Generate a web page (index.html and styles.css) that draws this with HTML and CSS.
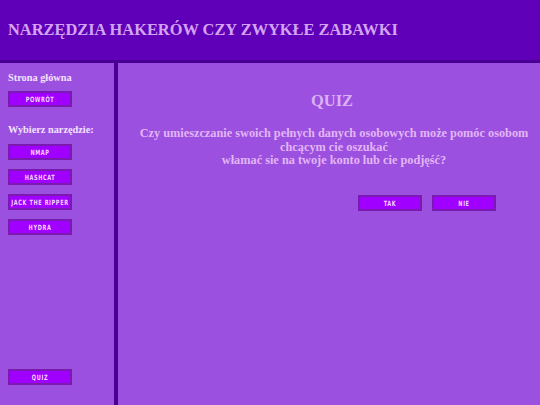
FILE: index.html
```html
<!DOCTYPE html>
<html lang="pl">
<head>
<meta charset="utf-8">
<title>Quiz</title>
<link rel="stylesheet" href="styles.css">
</head>
<body>
<header class="top">
  <h1 class="title">NARZĘDZIA HAKERÓW CZY ZWYKŁE ZABAWKI</h1>
</header>
<div class="main">
  <nav class="side">
    <h3 class="side-head">Strona główna</h3>
    <button class="btn"><span class="lbl">POWRÓT</span></button>
    <h3 class="side-head second">Wybierz narzędzie:</h3>
    <div class="tools">
      <button class="btn"><span class="lbl">NMAP</span></button>
      <button class="btn"><span class="lbl">HASHCAT</span></button>
      <button class="btn"><span class="lbl">JACK THE RIPPER</span></button>
      <button class="btn"><span class="lbl">HYDRA</span></button>
    </div>
    <button class="btn quiz-btn"><span class="lbl">QUIZ</span></button>
  </nav>
  <section class="content">
    <h2 class="quiz-title">QUIZ</h2>
    <p class="question">Czy umieszczanie swoich pełnych danych osobowych może pomóc osobom chcącym cie oszukać<br>włamać sie na twoje konto lub cie podjęść?</p>
    <div class="answers">
      <button class="btn"><span class="lbl">TAK</span></button>
      <button class="btn"><span class="lbl">NIE</span></button>
    </div>
  </section>
</div>
</body>
</html>
```
FILE: styles.css
```css
* { box-sizing: border-box; }
html, body { margin: 0; padding: 0; height: 100%; }
body {
  font-family: "Liberation Serif", "Times New Roman", serif;
  background: #9b50e0;
  overflow: hidden;
}
.top {
  height: 63px;
  background: #5f00b8;
  border-bottom: 3px solid #4a0094;
  display: flex;
  align-items: center;
  padding: 0 8px 0;
}
.title {
  margin: 0;
  font-size: 16.4px;
  font-weight: bold;
  color: #d4a4f2;
}
.main {
  display: flex;
  height: 342px;
}
.side {
  width: 118px;
  border-right: 4px solid #4a0094;
  background: #9b50e0;
  display: flex;
  flex-direction: column;
  align-items: flex-start;
  padding: 8px 0 20px 8px;
}
.side-head {
  margin: 0;
  font-size: 10.3px;
  line-height: 13px;
  font-weight: bold;
  color: #f2e2ff;
}
.side > .btn:first-of-type { margin-top: 7px; }
.second { margin-top: 16px; }
.tools {
  display: flex;
  flex-direction: column;
  gap: 9px;
  margin-top: 8px;
}
.btn {
  width: 64px;
  height: 16px;
  padding: 0;
  background: #a000ff;
  border: 2px solid #7a1ab0;
  color: #f6d2ff;
  font-family: "DejaVu Sans Condensed", "DejaVu Sans", sans-serif;
  font-weight: bold;
  font-size: 5.6px;
  letter-spacing: 0.6px;
  line-height: 12px;
  white-space: nowrap;
  text-align: center;
  cursor: pointer;
}
.lbl {
  display: inline-block;
  transform: scaleY(1.3);
}
.quiz-btn { margin-top: auto; }
.content {
  flex: 1;
  display: flex;
  flex-direction: column;
  align-items: center;
  padding: 28px 4px 0 14px;
}
.quiz-title {
  margin: 0 4px 0 0;
  font-size: 16.5px;
  line-height: 20px;
  color: #dcb0f4;
}
.question {
  margin: 16px 0 0;
  font-size: 12.3px;
  line-height: 13.5px;
  font-weight: bold;
  text-align: center;
  color: #e2b6f4;
}
.answers {
  display: flex;
  gap: 10px;
  margin-top: 27px;
  margin-left: 186px;
}
```
